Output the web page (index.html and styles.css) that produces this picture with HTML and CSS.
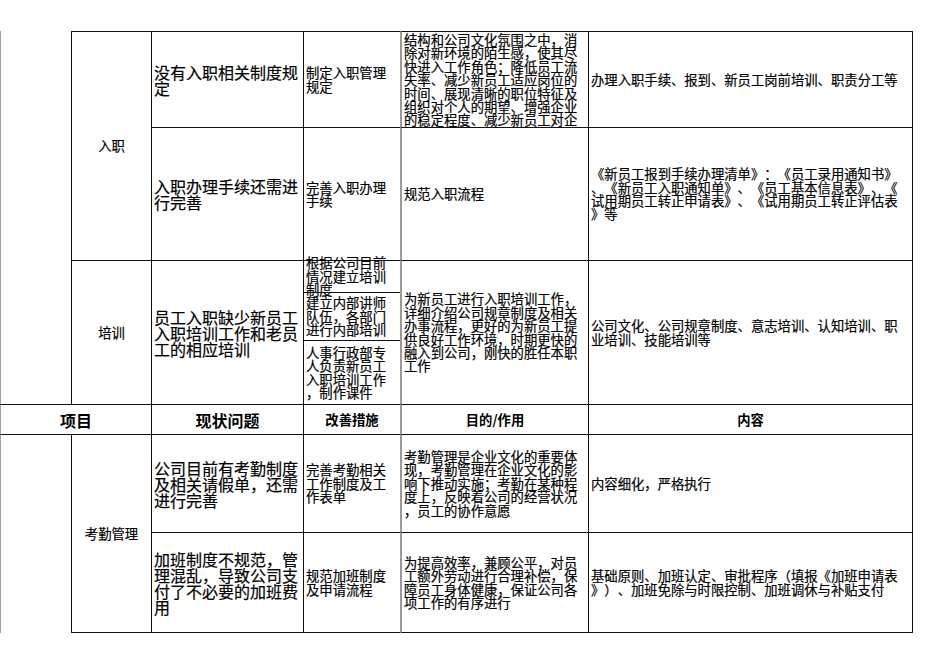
FILE: index.html
```html
<!DOCTYPE html>
<html lang="zh-CN">
<head>
<meta charset="utf-8">
<title>人事管理改善表</title>
<link rel="stylesheet" href="styles.css">
</head>
<body>
<div class="sheet">
  <div class="cell blank-top rs5"></div>
  <div class="cell label rs2">入职</div>
  <div class="cell big">没有入职相关制度规<br>定</div>
  <div class="cell">制定入职管理<br>规定</div>
  <div class="cell purpose top-align">结构和公司文化氛围之中，消<br>除对新环境的陌生感，使其尽<br>快进入工作角色；降低员工流<br>失率、减少新员工适应岗位的<br>时间、展现清晰的职位特征及<br>组织对个人的期望、增强企业<br>的稳定程度、减少新员工对企</div>
  <div class="cell last">办理入职手续、报到、新员工岗前培训、职责分工等</div>

  <div class="cell big">入职办理手续还需进<br>行完善</div>
  <div class="cell">完善入职办理<br>手续</div>
  <div class="cell purpose">规范入职流程</div>
  <div class="cell last">《新员工报到手续办理清单》：《员工录用通知书》<br>、《新员工入职通知单》、《员工基本信息表》、《<br>试用期员工转正申请表》、《试用期员工转正评估表<br>》等</div>

  <div class="cell label rs3">培训</div>
  <div class="cell big rs3">员工入职缺少新员工<br>入职培训工作和老员<br>工的相应培训</div>
  <div class="cell">根据公司目前<br>情况建立培训<br>制度</div>
  <div class="cell purpose rs3">为新员工进行入职培训工作，<br>详细介绍公司规章制度及相关<br>办事流程，更好的为新员工提<br>供良好工作环境，时期更快的<br>融入到公司，刚快的胜任本职<br>工作</div>
  <div class="cell last rs3">公司文化、公司规章制度、意志培训、认知培训、职<br>业培训、技能培训等</div>
  <div class="cell">建立内部讲师<br>队伍，各部门<br>进行内部培训</div>
  <div class="cell">人事行政部专<br>人负责新员工<br>入职培训工作<br>，制作课件</div>

  <div class="cell head big first cs2">项目</div>
  <div class="cell head big">现状问题</div>
  <div class="cell head">改善措施</div>
  <div class="cell head purpose">目的/作用</div>
  <div class="cell head last">内容</div>

  <div class="cell first rs2"></div>
  <div class="cell label rs2 bottom">考勤管理</div>
  <div class="cell big">公司目前有考勤制度<br>及相关请假单，还需<br>进行完善</div>
  <div class="cell">完善考勤相关<br>工作制度及工<br>作表单</div>
  <div class="cell purpose">考勤管理是企业文化的重要体<br>现，考勤管理在企业文化的影<br>响下推动实施；考勤在某种程<br>度上，反映着公司的经营状况<br>，员工的协作意愿</div>
  <div class="cell last">内容细化，严格执行</div>

  <div class="cell big bottom">加班制度不规范，管<br>理混乱，导致公司支<br>付了不必要的加班费<br>用</div>
  <div class="cell bottom">规范加班制度<br>及申请流程</div>
  <div class="cell purpose bottom">为提高效率，兼顾公平，对员<br>工额外劳动进行合理补偿，保<br>障员工身体健康，保证公司各<br>项工作的有序进行</div>
  <div class="cell last bottom">基础原则、加班认定、审批程序（填报《加班申请表<br>》）、加班免除与时限控制、加班调休与补贴支付</div>
</div>
</body>
</html>
```
FILE: styles.css
```css
html, body {
  margin: 0;
  padding: 0;
  background: #ffffff;
}

body {
  font-family: "Noto Sans CJK SC", "Liberation Sans", sans-serif;
  color: #000000;
}

.sheet {
  display: grid;
  grid-template-columns: 71px 80px 152px 97px 188px 325px;
  grid-template-rows: 96px 133px 32px 48px 64px 30px 98px 101px;
  width: 913px;
  margin-top: 31px;
}

.cell {
  box-sizing: border-box;
  display: flex;
  align-items: center;
  padding: 0 2px;
  border-left: 1px solid #111111;
  border-top: 1px solid #111111;
  font-size: 13.33px;
  line-height: 13.4px;
  white-space: nowrap;
  min-width: 0;
  text-spacing-trim: space-all;
  -webkit-text-stroke: 0.2px #000000;
}

.big {
  font-size: 16px;
  line-height: 16px;
}

.label {
  justify-content: center;
}

.head {
  justify-content: center;
  font-weight: 700;
  -webkit-text-stroke: 0;
}

.purpose {
  border-left: 2px solid #9a9a9a;
}

.top-align {
  align-items: flex-start;
  padding-top: 1px;
}

.last {
  border-right: 1px solid #111111;
}

.bottom {
  border-bottom: 1px solid #111111;
}

.blank-top {
  border-top: none;
  border-left: 1px solid #a0a0a0;
}

.first {
  border-left: 1px solid #a0a0a0;
}

.rs2 {
  grid-row: span 2;
}

.rs3 {
  grid-row: span 3;
}

.rs5 {
  grid-row: span 5;
}

.cs2 {
  grid-column: span 2;
}
```
